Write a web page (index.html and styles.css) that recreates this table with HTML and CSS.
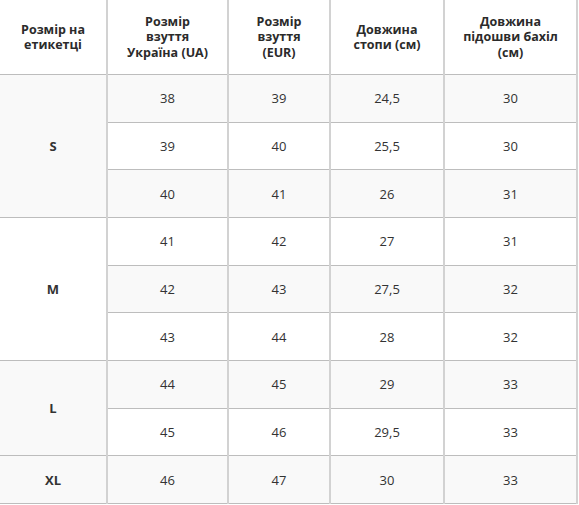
FILE: index.html
```html
<!DOCTYPE html>
<html>
<head>
    <meta charset="utf-8">
    <title>Таблиця розмірів</title>
    <link rel="stylesheet" href="styles.css">
</head>
<body>
    <table class="sizes">
        <colgroup>
            <col class="c1">
            <col class="c2">
            <col class="c3">
            <col class="c4">
            <col class="c5">
        </colgroup>
        <thead>
            <tr>
                <th>Розмір на<br>етикетці</th>
                <th>Розмір<br>взуття<br>Україна (UA)</th>
                <th>Розмір<br>взуття<br>(EUR)</th>
                <th>Довжина<br>стопи (см)</th>
                <th>Довжина<br>підошви бахіл<br>(см)</th>
            </tr>
        </thead>
        <tbody>
            <tr><td class="label" rowspan="3">S</td><td>38</td><td>39</td><td>24,5</td><td>30</td></tr>
            <tr><td>39</td><td>40</td><td>25,5</td><td>30</td></tr>
            <tr><td>40</td><td>41</td><td>26</td><td>31</td></tr>
            <tr><td class="label" rowspan="3">M</td><td>41</td><td>42</td><td>27</td><td>31</td></tr>
            <tr><td>42</td><td>43</td><td>27,5</td><td>32</td></tr>
            <tr><td>43</td><td>44</td><td>28</td><td>32</td></tr>
            <tr><td class="label" rowspan="2">L</td><td>44</td><td>45</td><td>29</td><td>33</td></tr>
            <tr><td>45</td><td>46</td><td>29,5</td><td>33</td></tr>
            <tr><td class="label">XL</td><td>46</td><td>47</td><td>30</td><td>33</td></tr>
        </tbody>
    </table>
</body>
</html>
```
FILE: styles.css
```css
body{
    margin: 0;
    background-color: #ffffff;
    font-family: "Open Sans", "Noto Sans", sans-serif;
    font-size: 13px;
    color: #333333;
}

.sizes{
    width: 577px;
    border-collapse: collapse;
    table-layout: fixed;
}

.c1{ width: 107px; }
.c2{ width: 121px; }
.c3{ width: 102px; }
.c4{ width: 114px; }
.c5{ width: 133px; }

.sizes th,
.sizes td{
    padding: 0 4px;
    text-align: center;
    vertical-align: middle;
    border-bottom: 1px solid #bdbdbd;
    border-right: 2px solid #d2d2d2;
}

.sizes th{
    height: 74px;
    font-weight: 700;
    line-height: 15.5px;
    font-size: 12.5px;
    color: #2b2b2b;
}

.sizes td{
    height: 46.67px;
}

.sizes tbody tr:nth-child(odd){
    background-color: #f9f9f9;
}

.sizes .label{
    font-weight: 700;
}
```
